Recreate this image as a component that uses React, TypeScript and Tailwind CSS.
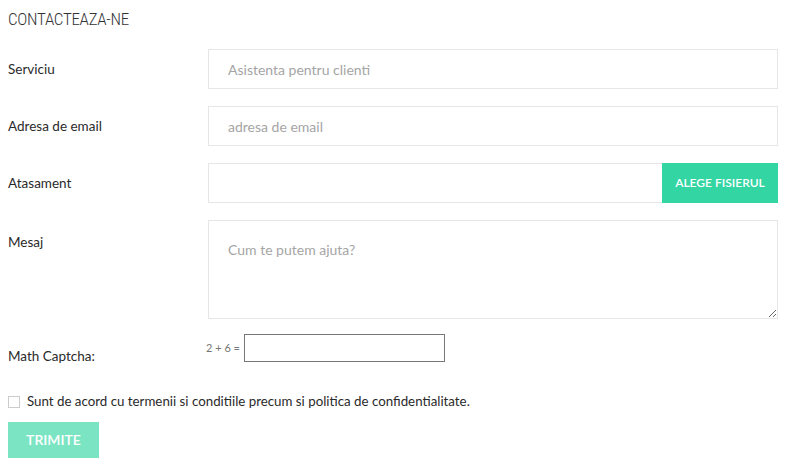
import { useState } from "react";

const body = { fontFamily: "Lato, 'Open Sans', sans-serif" };

function Row({ label, children, top = false }: { label: string; children: React.ReactNode; top?: boolean }) {
  return (
    <div className={`flex ${top ? "items-start" : "items-center"}`}>
      <label className={`w-[200px] shrink-0 text-[13.5px] text-[#2a2a2a] ${top ? "pt-[12px]" : ""}`}>{label}</label>
      <div className="flex-1">{children}</div>
    </div>
  );
}

export default function App() {
  const [agree, setAgree] = useState(false);

  return (
    <div className="bg-white min-h-[467px] pl-[8px] pr-[13px] pt-[9px]" style={body}>
      <h2
        className="text-[17px] leading-[20px] text-[#333] font-light tracking-[-0.3px]"
        style={{ fontFamily: "'Roboto Condensed', 'Liberation Sans Narrow', Roboto, sans-serif" }}
      >
        CONTACTEAZA-NE
      </h2>

      <div className="mt-[20px] flex flex-col gap-[17px]">
        <Row label="Serviciu">
          <input
            className="w-full h-[40px] border border-[#e6e6e6] px-[19px] text-[14px] text-[#333] placeholder:text-[#a5a5a5] outline-none"
            placeholder="Asistenta pentru clienti"
          />
        </Row>
        <Row label="Adresa de email">
          <input
            className="w-full h-[40px] border border-[#e6e6e6] px-[19px] text-[14px] text-[#333] placeholder:text-[#a5a5a5] outline-none"
            placeholder="adresa de email"
          />
        </Row>
        <Row label="Atasament">
          <div className="flex h-[40px] border border-[#e6e6e6] border-r-0">
            <div className="flex-1" />
            <button className="w-[116px] -my-px bg-[#33d5a2] text-white text-[12px] font-semibold">
              ALEGE FISIERUL
            </button>
          </div>
        </Row>
        <Row label="Mesaj" top>
          <textarea
            className="block w-full h-[99px] border border-[#e6e6e6] px-[19px] py-[18px] text-[14px] text-[#333] placeholder:text-[#a5a5a5] outline-none"
            placeholder="Cum te putem ajuta?"
          />
        </Row>
      </div>

      <div className="mt-[15px] flex items-end">
        <label className="w-[198px] shrink-0 text-[13.5px] text-[#2a2a2a] leading-[16px] -mb-[2px]">Math Captcha:</label>
        <div className="flex items-center gap-[4px] text-[11px] text-[#777]">
          <span>2 + 6 =</span>
          <input className="w-[201px] h-[28px] border border-[#777] outline-none px-1 text-[13px]" />
        </div>
      </div>

      <label className="mt-[30px] flex items-center gap-[7px] text-[13.3px] text-[#2a2a2a] cursor-pointer">
        <span
          className={`w-[12px] h-[12px] border border-[#ccc] bg-white ${agree ? "bg-[#33d5a2]" : ""}`}
          onClick={() => setAgree(!agree)}
        />
        Sunt de acord cu termenii si conditiile precum si politica de confidentialitate.
      </label>

      <button className="mt-[10px] w-[91px] h-[36px] bg-[#7be5c3] text-white text-[14px] font-semibold">
        TRIMITE
      </button>
    </div>
  );
}
